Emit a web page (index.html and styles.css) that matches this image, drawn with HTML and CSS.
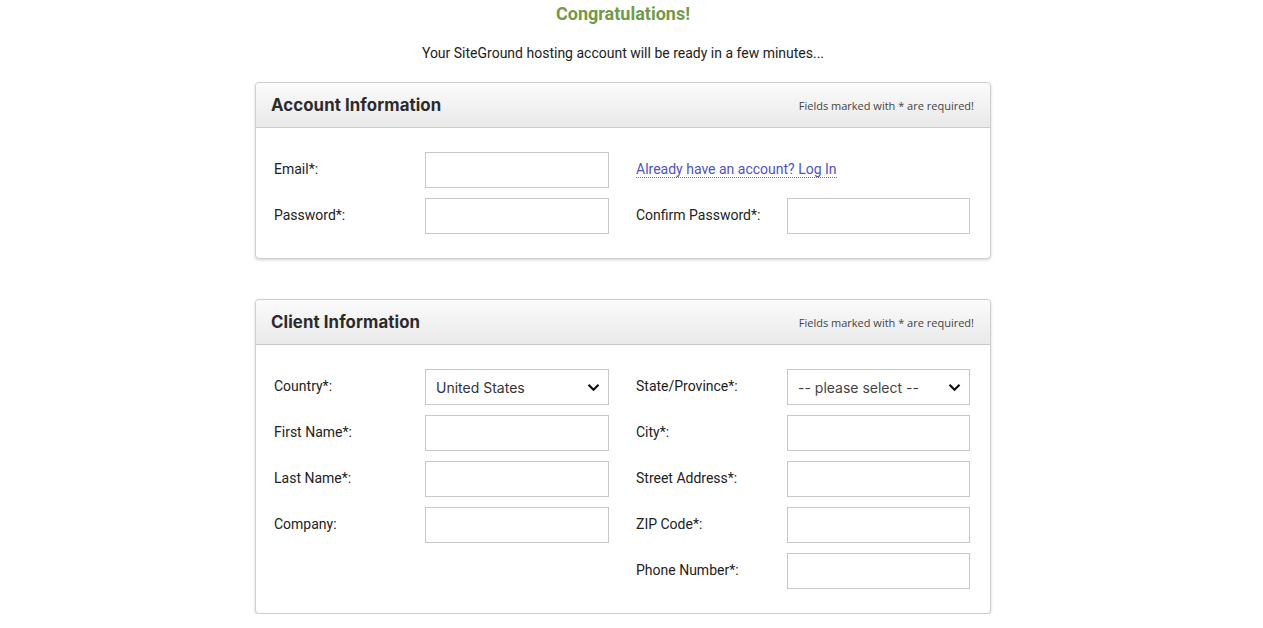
FILE: index.html
```html
<!DOCTYPE html>
<html>
<head>
<meta charset="utf-8">
<link rel="stylesheet" href="styles.css">
</head>
<body>
<div class="page">
  <h1 class="congrats">Congratulations!</h1>
  <p class="subtitle">Your SiteGround hosting account will be ready in a few minutes...</p>

  <section class="card">
    <div class="card-head">
      <h2>Account Information</h2>
      <span class="req">Fields marked with * are required!</span>
    </div>
    <div class="card-body grid">
      <label class="lbl">Email*:</label>
      <div class="field"></div>
      <div class="lbl right span2"><a class="link" href="#">Already have an account? Log In</a></div>
      <label class="lbl">Password*:</label>
      <div class="field"></div>
      <label class="lbl right">Confirm Password*:</label>
      <div class="field"></div>
    </div>
  </section>

  <section class="card second">
    <div class="card-head">
      <h2>Client Information</h2>
      <span class="req">Fields marked with * are required!</span>
    </div>
    <div class="card-body grid">
      <label class="lbl">Country*:</label>
      <div class="field select"><span>United States</span><svg width="13" height="9" viewBox="0 0 13 9"><path d="M1.5 1.8 L6.5 6.8 L11.5 1.8" fill="none" stroke="#111" stroke-width="2.2"/></svg></div>
      <label class="lbl right">State/Province*:</label>
      <div class="field select"><span class="ph">-- please select --</span><svg width="13" height="9" viewBox="0 0 13 9"><path d="M1.5 1.8 L6.5 6.8 L11.5 1.8" fill="none" stroke="#111" stroke-width="2.2"/></svg></div>

      <label class="lbl">First Name*:</label>
      <div class="field"></div>
      <label class="lbl right">City*:</label>
      <div class="field"></div>

      <label class="lbl">Last Name*:</label>
      <div class="field"></div>
      <label class="lbl right">Street Address*:</label>
      <div class="field"></div>

      <label class="lbl">Company:</label>
      <div class="field"></div>
      <label class="lbl right">ZIP Code*:</label>
      <div class="field"></div>

      <div></div>
      <div></div>
      <label class="lbl right">Phone Number*:</label>
      <div class="field"></div>
    </div>
  </section>
</div>
</body>
</html>
```

FILE: styles.css
```css
html, body {
  margin: 0;
  padding: 0;
  background: #fff;
}
body {
  font-family: Roboto, "Liberation Sans", sans-serif;
  color: #333;
}
.page {
  width: 1246px;
  display: flex;
  flex-direction: column;
  align-items: center;
}
.congrats {
  margin: 3px 0 0;
  font-size: 18px;
  line-height: 22px;
  font-weight: 700;
  color: #72994a;
}
.subtitle {
  margin: 20px 0 0;
  font-size: 14px;
  line-height: 16px;
  color: #222;
}
.card {
  margin-top: 21px;
  width: 734px;
  border: 1px solid #cfcfcf;
  border-radius: 4px;
  box-shadow: 0 1px 3px rgba(0,0,0,0.18);
  background: #fff;
}
.card.second {
  margin-top: 40px;
}
.card-head {
  height: 44px;
  display: flex;
  align-items: center;
  justify-content: space-between;
  padding: 0 16px 0 15px;
  background: linear-gradient(#fbfbfb, #e9e9e9);
  border-bottom: 1px solid #c9c9c9;
  border-radius: 4px 4px 0 0;
}
.card-head h2 {
  margin: 0;
  font-family: Inter, "DejaVu Sans", sans-serif;
  font-weight: 700;
  font-size: 16.8px;
  color: #2b2b2b;
  letter-spacing: 0.1px;
}
.req {
  font-family: "Open Sans", sans-serif;
  font-size: 11px;
  color: #444;
  padding-top: 1px;
}
.card-body {
  padding: 24px 20px 24px 18px;
}
.grid {
  display: grid;
  grid-template-columns: 151px 184px 178px 183px;
  grid-auto-rows: 36px;
  row-gap: 10px;
}
.lbl {
  display: flex;
  align-items: center;
  font-size: 14px;
  color: #222;
  padding-bottom: 3px;
  box-sizing: border-box;
  white-space: nowrap;
}
.lbl.right {
  padding-left: 27px;
}
.span2 {
  grid-column: span 2;
  padding-bottom: 1px;
}
.link {
  color: #5151c3;
  text-decoration: none;
  border-bottom: 1px dotted #6b6bcc;
  line-height: 16px;
}
.field {
  border: 1px solid #c8c8c8;
  box-sizing: border-box;
  background: #fff;
}
.select {
  display: flex;
  align-items: center;
  justify-content: space-between;
  padding: 0 8px 0 10px;
  font-family: Inter, "Open Sans", sans-serif;
  font-size: 14px;
  color: #333;
}
.select .ph {
  color: #444;
}
```
